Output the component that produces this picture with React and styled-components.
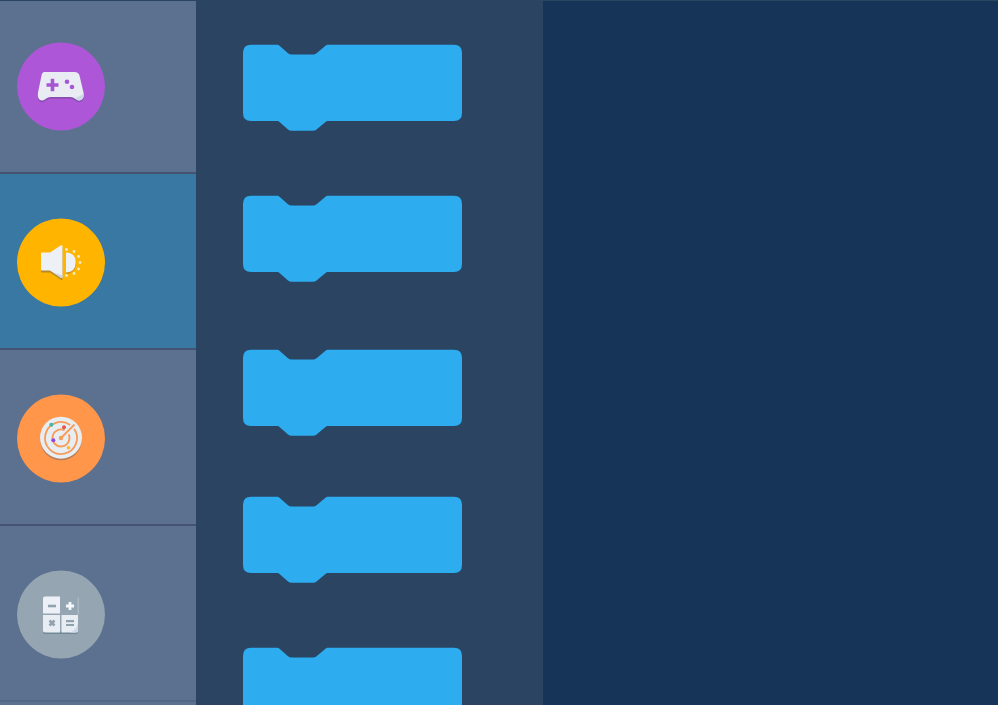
import React, { useState } from "react";
import styled, { createGlobalStyle } from "styled-components";

const GlobalStyle = createGlobalStyle`
  * { box-sizing: border-box; }
  body { margin: 0; background: #163457; font-family: "Open Sans", sans-serif; }
`;

const Editor = styled.main`
  display: grid;
  grid-template-columns: 196px 347px 1fr;
  height: 100vh;
  overflow: hidden;
  border-top: 1px solid #2b4760;
`;

const Categories = styled.nav`
  display: flex;
  flex-direction: column;
  min-height: 0;
  overflow: hidden;
  background: #5c7190;
`;

const CategoryButton = styled.button`
  display: flex;
  flex: none;
  align-items: flex-start;
  height: 176px;
  padding: 44px 17px 0;
  border: 0;
  border-bottom: 2px solid #435371;
  background: ${({ $active }) => ($active ? "#3878a2" : "#5c7190")};
  cursor: pointer;

  &:first-child {
    height: 173px;
    padding-top: 41px;
  }

  &:last-child {
    border-bottom-color: #526785;
  }
`;

const Disc = styled.span`
  display: block;
  width: 88px;
  height: 89px;

  svg { display: block; width: 88px; height: 89px; }
`;

const Palette = styled.section`
  min-height: 0;
  overflow: hidden;
  padding: 43px 47px 0;
  background: #2a4461;
`;

const Block = styled.div`
  width: 219px;
  height: 87px;
  margin-bottom: ${({ $space }) => $space}px;

  svg { display: block; width: 219px; height: 87px; }
`;

const Canvas = styled.section`
  background: #163457;
`;

function GamepadIcon() {
  const body =
    "M27.500 29.500H57.500Q61.500 29.500 62.500 33L66.500 50Q67.500 57.500 62.500 58Q60.500 58 58.500 56.500Q56 54.500 53.500 54.500H33.500Q31 54.500 28.500 56.500Q26.500 58 24.500 58Q20 57.500 21 50L24.500 33Q25 29.500 27.500 29.500Z";
  return (
    <>
      <path d={body} fill="#7c489f" opacity=".7" transform="translate(0 1.800)" />
      <path d={body} fill="#e9edf3" />
      <path d="M60 54.500Q65 53 66.600 50Q67.500 57.500 62.500 58Q60 58 58 56Z" fill="#ccd9e5" />
      <path d="M33.700 36.300H37.300V40.700H41.500V44.300H37.300V48.700H33.700V44.300H29.500V40.700H33.700Z" fill="#a757d2" />
      <circle cx="50" cy="39.300" r="2.300" fill="#a757d2" />
      <circle cx="55" cy="44.500" r="2.300" fill="#a757d2" />
    </>
  );
}

function SpeakerIcon() {
  const horn =
    "M24 35Q24 34 25 34H32Q33.500 34 34.500 33L43.500 27Q45.500 26 45.500 28V58Q45.500 60.500 43.500 59L34.500 53Q33.500 52 32 52H25Q24 52 24 51Z";
  return (
    <>
      <path d={horn} fill="#b98a28" transform="translate(0 2)" />
      <path d="M49 35.500Q59 36 59 45T49 56Z" fill="#cf9415" />
      <path d={horn} fill="#edf0f5" />
      <path d="M36 54L45.500 57V58Q45.500 60.500 43.500 59Z" fill="#cad5e1" />
      <path d="M49 34Q58.700 34.500 58.700 44T49 54Z" fill="#edf0f5" />
      <g fill="#f7eac2">
        <circle cx="49.500" cy="31" r="1.400" />
        <circle cx="57" cy="33" r="1.400" />
        <circle cx="61.500" cy="38" r="1.400" />
        <circle cx="63" cy="44" r="1.400" />
        <circle cx="61.500" cy="50.500" r="1.400" />
        <circle cx="57" cy="55" r="1.400" />
        <circle cx="49.500" cy="57" r="1.400" />
      </g>
    </>
  );
}

function RadarIcon() {
  return (
    <>
      <circle cx="44" cy="45" r="20.800" fill="#b77c58" />
      <circle cx="44" cy="43.200" r="21" fill="#e8edf2" />
      <g fill="none" stroke="#f79b59" strokeWidth="1.800">
        <path d="M53.200 30.400A16 16 0 1 0 57.100 34.300" />
        <path d="M47.600 35.800A8.500 8.500 0 1 0 51.700 39.900" />
        <path d="M44 43.500L57.500 30" />
      </g>
      <circle cx="44" cy="43.500" r="2.200" fill="#f79b59" />
      <circle cx="34.300" cy="30.300" r="2" fill="#45b5a5" />
      <circle cx="47" cy="32.800" r="2" fill="#e35353" />
      <circle cx="36.300" cy="45.700" r="2" fill="#9244e8" />
      <circle cx="51.500" cy="53.200" r="1.800" fill="#ffb52e" />
    </>
  );
}

function OperatorsIcon() {
  return (
    <>
      <path d="M26 61H61Q61 63.500 59 63.500H28Q26 63.500 26 61Z" fill="#718896" />
      <path d="M28 26H43V43H26V28Q26 26 28 26Z" fill="#edf1f7" />
      <path d="M26 44.500H43V62H28Q26 62 26 60Z" fill="#e8edf4" />
      <path d="M44.500 44.500H61V60Q61 62 59 62H44.500Z" fill="#e8edf4" />
      <path d="M61 53Q59 60 53 62H59Q61 62 61 60Z" fill="#cfd8e8" />
      <path d="M61.200 27V44" stroke="#b5c3cd" />
      <path d="M53 31.500V39.500M49 35.500H57" stroke="#f4f7fb" strokeWidth="2.800" />
      <g fill="none" stroke="#91a2af" strokeWidth="2.200">
        <path d="M31 35.500H39" strokeWidth="2.600" />
        <path d="M32.500 50L37.500 55M37.500 50L32.500 55" strokeWidth="2.600" />
        <path d="M49 50.700H57M49 54.500H57" />
      </g>
    </>
  );
}

function CommandBlock({ space }) {
  return (
    <Block $space={space}>
      <svg viewBox="0 0 219 87" aria-hidden="true">
        <path
          d="M8 .700H34.500Q35.500 .700 36.500 1.700L45 9.300Q46.500 10.500 48.500 10.500H70Q72 10.500 73.500 9.300L82.500 1.700Q83.500 .700 84.500 .700H211Q219 .700 219 8.700V69Q219 77 211 77H84.500Q83.500 77 82.500 78L73.500 85.600Q72 86.800 70 86.800H48.500Q46.500 86.800 45 85.600L36.500 78Q35.500 77 34.500 77H8Q0 77 0 69V8.700Q0 .700 8 .700Z"
          fill="#2dacef"
        />
      </svg>
    </Block>
  );
}

const categories = [
  { name: "Motion", color: "#ad57d8", Icon: GamepadIcon },
  { name: "Sound", color: "#ffb400", Icon: SpeakerIcon },
  { name: "Sensing", color: "#ff964a", Icon: RadarIcon },
  { name: "Operators", color: "#95a6b2", Icon: OperatorsIcon },
];

const blockSpaces = [64, 67, 60, 64, 64];

export default function App() {
  const [active, setActive] = useState("Sound");
  return (
    <>
      <GlobalStyle />
      <Editor>
        <Categories>
          {categories.map(({ name, color, Icon }) => (
            <CategoryButton
              key={name}
              type="button"
              aria-label={name}
              aria-pressed={active === name}
              $active={active === name}
              onClick={() => setActive(name)}
            >
              <Disc>
                <svg viewBox="0 -.5 88 89" aria-hidden="true">
                  <circle cx="44" cy="44" r="44" fill={color} />
                  <Icon />
                </svg>
              </Disc>
            </CategoryButton>
          ))}
        </Categories>
        <Palette>
          {blockSpaces.map((space, index) => (
            <CommandBlock key={index} space={space} />
          ))}
        </Palette>
        <Canvas />
      </Editor>
    </>
  );
}
